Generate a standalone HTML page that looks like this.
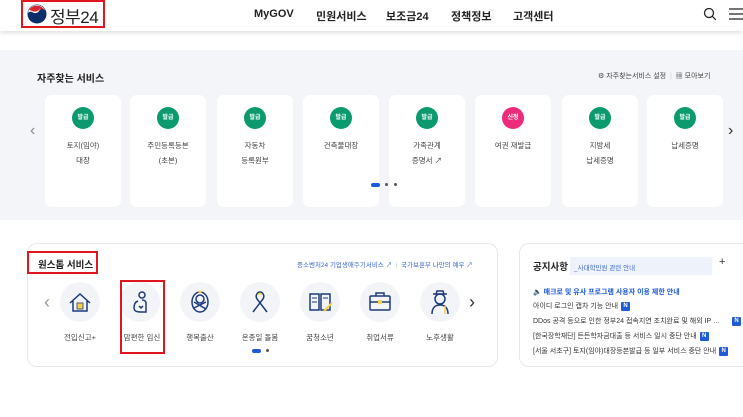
<!DOCTYPE html>
<html><head><meta charset="utf-8"><style>
*{margin:0;padding:0;box-sizing:border-box}
body{width:743px;height:417px;overflow:hidden;background:#fff;font-family:"Liberation Sans","Noto Sans CJK KR",sans-serif;color:#222;position:relative}
.abs{position:absolute}
.hdr{left:0;top:0;width:743px;height:31px;background:#fff;box-shadow:0 2px 4px rgba(0,0,0,.12);z-index:2}
.nav{font-size:11px;font-weight:bold;color:#222;top:8px}
.gray{left:0;top:50px;width:743px;height:170px;background:#f4f5f9}
.card{width:76px;height:112px;background:#fff;border-radius:7px;top:95px;text-align:center}
.bd{position:absolute;left:27px;top:12px;width:22px;height:22px;border-radius:50%;background:#0a9a6e;color:#fff;font-size:6px;font-weight:bold;line-height:22px}
.ct{position:absolute;left:0;width:76px;top:43px;font-size:7.5px;line-height:15px;color:#444}
.dot{width:4px;height:4px;border-radius:50%;background:#555;display:inline-block}
.box{border:1px solid #e6e8ee;border-radius:10px;background:#fff}
.ic{width:40px;height:40px;border-radius:50%;background:#f2f4f8;top:282px}
.lb{top:332px;font-size:7.5px;color:#444;width:60px;text-align:center}
.nt{font-size:7px;color:#333;left:533px}
.N{display:inline-block;width:9px;height:9px;background:#1e5bd6;color:#fff;font-size:6px;font-weight:bold;text-align:center;line-height:9px;border-radius:1px;margin-left:3px;vertical-align:middle}
</style></head><body>
<div class="abs hdr">
 <div class="abs" style="left:21px;top:0;width:84px;height:28px;border:2px solid #e0161e"></div>
 <svg class="abs" style="left:27px;top:4px" width="20" height="20" viewBox="0 0 20 20"><circle cx="10" cy="10" r="9.5" fill="#0b2e6a"/><path d="M1 9a9 9 0 0 1 17-3c-2-2-5-1-6 1s-4 3-7 1c-2-1-3 0-4 1z" fill="#fff"/><path d="M2 6a9 9 0 0 1 16 1c-2-3-5-2-6-1-2 2-5 2-7 1C3 6 2 6 2 6z" fill="#d7262f"/></svg>
 <div class="abs" style="left:50px;top:3px;font-size:17px;color:#222;letter-spacing:-0.5px">정부24</div>
 <div class="abs nav" style="left:254px">MyGOV</div>
 <div class="abs nav" style="left:316px">민원서비스</div>
 <div class="abs nav" style="left:386px">보조금24</div>
 <div class="abs nav" style="left:451px">정책정보</div>
 <div class="abs nav" style="left:513px">고객센터</div>
 <svg class="abs" style="left:703px;top:7px" width="14" height="14"><circle cx="6" cy="6" r="4.5" fill="none" stroke="#222" stroke-width="1.3"/><path d="M9.3 9.3l3.5 3.5" stroke="#222" stroke-width="1.3"/></svg>
 <svg class="abs" style="left:729px;top:8px" width="14" height="12"><path d="M0 1h14M0 6h14M0 11h14" stroke="#222" stroke-width="1.3"/></svg>
</div>
<div class="abs gray"></div>
<div class="abs" style="left:37px;top:70px;font-size:10px;font-weight:bold">자주찾는 서비스</div>
<div class="abs" style="left:598px;top:71px;font-size:7px;color:#444">⚙ 자주찾는서비스 설정 &nbsp;<span style="color:#ccc">|</span>&nbsp; ▦ 모아보기</div>
<div class="abs" style="left:30px;top:122px;font-size:16px;color:#888">‹</div>
<div class="abs" style="left:728px;top:122px;font-size:16px;color:#333">›</div>
<div class="abs card" style="left:45px"><div class="bd">발급</div><div class="ct">토지(임야)<br>대장</div></div>
<div class="abs card" style="left:130px"><div class="bd">발급</div><div class="ct">주민등록등본<br>(초본)</div></div>
<div class="abs card" style="left:217px"><div class="bd">발급</div><div class="ct">자동차<br>등록원부</div></div>
<div class="abs card" style="left:303px"><div class="bd">발급</div><div class="ct">건축물대장</div></div>
<div class="abs card" style="left:389px"><div class="bd">발급</div><div class="ct">가족관계<br>증명서 ↗</div></div>
<div class="abs card" style="left:475px"><div class="bd" style="background:#ee2a7b">신청</div><div class="ct">여권 재발급</div></div>
<div class="abs card" style="left:562px"><div class="bd">발급</div><div class="ct">지방세<br>납세증명</div></div>
<div class="abs card" style="left:647px"><div class="bd">발급</div><div class="ct">납세증명</div></div>
<div class="abs" style="left:371px;top:183px;width:9px;height:4px;border-radius:2px;background:#1e5bd6"></div>
<div class="abs dot" style="left:385px;top:183px;width:3px;height:3px"></div>
<div class="abs dot" style="left:394px;top:183px;width:3px;height:3px"></div>

<div class="abs box" style="left:27px;top:243px;width:471px;height:124px"></div>
<div class="abs" style="left:27px;top:251px;width:71px;height:23px;border:2px solid #e0161e"></div>
<div class="abs" style="left:38px;top:257px;font-size:9.5px;font-weight:bold">원스톱 서비스</div>
<div class="abs" style="left:297px;top:259px;font-size:6.5px;color:#3b6ad1">중소벤처24 기업생애주기서비스 ↗ <span style="color:#ccc">&nbsp;|&nbsp;</span> 국가보훈부 나만의 예우 ↗</div>
<div class="abs" style="left:44px;top:292px;font-size:18px;color:#999">‹</div>
<div class="abs" style="left:469px;top:292px;font-size:18px;color:#333">›</div>
<div class="abs ic" style="left:60px"></div><div class="abs ic" style="left:120px"></div><div class="abs ic" style="left:180px"></div><div class="abs ic" style="left:240px"></div><div class="abs ic" style="left:300px"></div><div class="abs ic" style="left:360px"></div><div class="abs ic" style="left:420px"></div>
<svg class="abs" style="left:60px;top:282px" width="420" height="40" fill="none" stroke="#1c3a78" stroke-width="1.5">
 <path d="M10 21L20 12l10 9M13 19v10h14V19"/><rect x="17" y="21" width="6" height="6" fill="#f7d14a" stroke="#1c3a78" stroke-width=".8"/>
 <circle cx="82" cy="13" r="3"/><path d="M78 19c-3 1-4 4-4 7 0 3 3 4 6 4h6v-9c0-2-2-3-4-3"/><path d="M79 24l2 2 2-2" fill="#f7d14a"/>
 <ellipse cx="140" cy="20" rx="8" ry="10"/><circle cx="140" cy="17" r="4"/><path d="M134 26l12-6M134 20l12 7"/><circle cx="140" cy="10" r="1.5" fill="#f7d14a" stroke="none"/>
 <path d="M193 30l10-13c2-3 0-7-3-7s-5 4-3 7l10 13"/><path d="M198 13c1-2 3-2 4 0" stroke="#f7d14a"/>
 <path d="M250 12h9v16h-9zM261 12h9v16h-9z"/><path d="M252 16h5M252 20h5M263 16h5" stroke-width="1"/><path d="M264 29l8-8" stroke="#f7d14a" stroke-width="2"/>
 <rect x="310" y="14" width="20" height="14" rx="1"/><path d="M316 14v-3h8v3M310 20h20"/><rect x="318" y="18" width="4" height="4" fill="#f7d14a" stroke="none"/>
 <circle cx="380" cy="17" r="5"/><path d="M373 12h14M376 12l1-3h6l1 3M372 32c0-6 3-9 8-9s8 3 8 9"/><path d="M385 24v8" stroke="#f7d14a"/>
</svg>
<div class="abs" style="left:120px;top:280px;width:45px;height:74px;border:2px solid #e0161e"></div>
<div class="abs lb" style="left:50px">전입신고+</div>
<div class="abs lb" style="left:112px">맘편한 임신</div>
<div class="abs lb" style="left:170px">행복출산</div>
<div class="abs lb" style="left:230px">온종일 돌봄</div>
<div class="abs lb" style="left:290px">꿈청소년</div>
<div class="abs lb" style="left:350px">취업서류</div>
<div class="abs lb" style="left:410px">노후생활</div>
<div class="abs" style="left:252px;top:349px;width:9px;height:4px;border-radius:2px;background:#1e5bd6"></div>
<div class="abs dot" style="left:266px;top:349px;width:3px;height:3px"></div>

<div class="abs box" style="left:519px;top:243px;width:240px;height:124px"></div>
<div class="abs" style="left:533px;top:259px;font-size:9.5px;font-weight:bold">공지사항</div>
<div class="abs" style="left:570px;top:257px;width:142px;height:18px;background:#eef3fb;font-size:6.5px;color:#3b6ad1;padding:5px 4px">_사대학민원 관련 안내</div>
<div class="abs" style="left:719px;top:256px;font-size:11px;color:#333">+</div>
<div class="abs nt" style="top:287px;color:#1e5bd6;font-weight:bold">🔈 매크로 및 유사 프로그램 사용자 이용 제한 안내</div>
<div class="abs nt" style="top:301px">아이디 로그인 캡차 기능 안내<span class="N">N</span></div>
<div class="abs nt" style="top:316px">DDos 공격 등으로 인한 정부24 접속지연 조치완료 및 해외 IP … <span class="N" style="margin-left:10px">N</span></div>
<div class="abs nt" style="top:331px">[한국장학재단] 든든학자금대출 등 서비스 일시 중단 안내<span class="N">N</span></div>
<div class="abs nt" style="top:346px">[서울 서초구] 토지(임야)대장등본발급 등 일부 서비스 중단 안내<span class="N">N</span></div>
</body></html>
